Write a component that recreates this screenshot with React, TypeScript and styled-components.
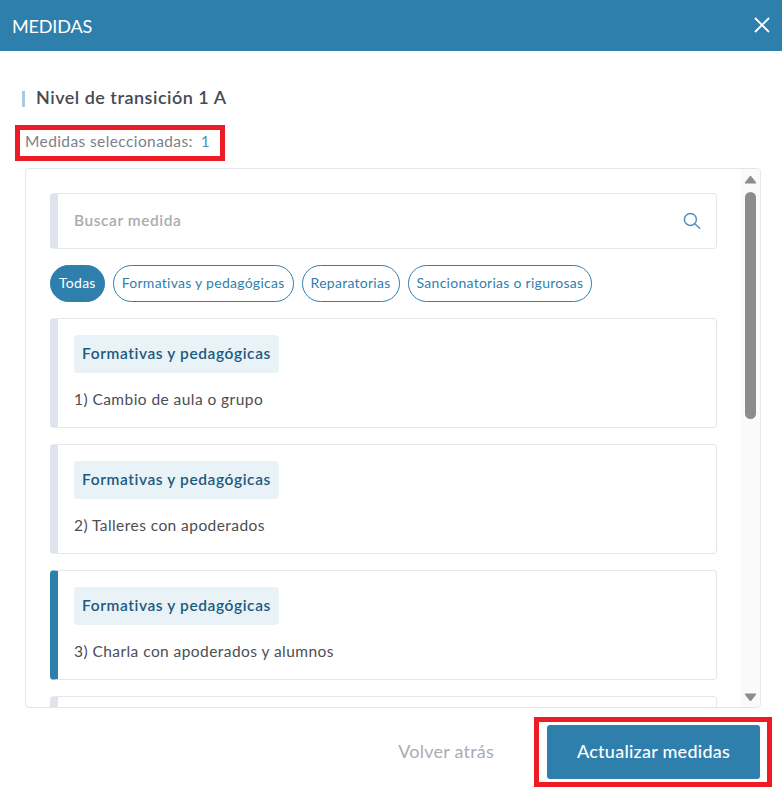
import React from "react";
import styled, { createGlobalStyle } from "styled-components";

const Global = createGlobalStyle`
  html, body { margin: 0; padding: 0; background: #fff; }
  body { width: 782px; height: 787px; overflow: hidden; font-family: "Lato", "Open Sans", sans-serif; }
  * { box-sizing: border-box; }
`;
const Modal = styled.div`
  width: 782px; height: 787px; display: flex; flex-direction: column;
`;
const Header = styled.header`
  height: 51px; background: #2f7fad; color: #fff; display: flex; align-items: center;
  justify-content: space-between; padding: 0 12px; flex: none;
`;
const HeaderTitle = styled.h1`
  margin: 0; font-size: 18px; font-weight: 400; line-height: 46px; height: 46px; letter-spacing: -.15px;
`;
const CloseButton = styled.button`
  border: 0; background: none; padding: 0; width: 16px; height: 16px; display: flex; margin-top: -1px; margin-right: 0;
`;
const Body = styled.div`
  flex: 1; display: flex; flex-direction: column; padding: 37px 21px 0 15px; min-height: 0;
`;
const Level = styled.div`
  display: flex; align-items: center; gap: 11px; height: 20px; margin-left: 7px; margin-bottom: 17px;
`;
const LevelBar = styled.span`
  width: 3px; height: 16px; background: #a9cbdf; flex: none; margin-top: 1px;
`;
const LevelName = styled.h2`
  margin: 0 0 2px; font-size: 18px; font-weight: 600; color: #464a53; letter-spacing: .5px; line-height: 18px;
`;
const Highlight = styled.div`
  border: 5px solid #ed1c24; height: 36px; width: 210px; display: flex; align-items: center; gap: 8px;
  padding: 0 0 5px 5px; font-size: 15.5px; color: #7c8087; letter-spacing: .4px; flex: none;
`;
const Count = styled.span`
  color: #4f93bb; font-size: 15.5px;
`;
const Panel = styled.section`
  margin: 7px 0 0 10px; height: 540px; width: 736px; border: 1px solid #e4e6ee; border-radius: 4px;
  display: flex; overflow: hidden; flex: none;
`;
const Scroller = styled.div`
  flex: 1; min-width: 0; overflow: hidden; padding: 24px 24px 0 24px; display: flex; flex-direction: column;
`;
const Search = styled.div`
  height: 56px; flex: none; border: 1px solid #e4e6ee; border-left: 8px solid #dfe3ec; border-radius: 4px;
  display: flex; align-items: center; justify-content: space-between; padding: 0 15px 2px 16px;
  font-size: 15.5px; font-weight: 600; color: #a9acb3; letter-spacing: .55px;
`;
const SearchGlyph = styled.svg`
  margin-top: 2px; flex: none;
`;
const Chips = styled.div`
  display: flex; gap: 8px; margin: 16px 0; flex: none;
`;
const Chip = styled.button<{ $active?: boolean }>`
  height: 37px; border-radius: 18.5px; border: 1px solid #2f7fad; padding: 0 8px 2px; font: inherit; font-size: 14px;
  letter-spacing: .27px; white-space: nowrap;
  color: ${(p) => (p.$active ? "#fff" : "#2f7fad")};
  background: ${(p) => (p.$active ? "#2f7fad" : "#fff")};
`;
const Cards = styled.div`
  display: flex; flex-direction: column; gap: 16px; flex: none;
`;
const Card = styled.article<{ $selected?: boolean }>`
  height: 110px; flex: none; border: 1px solid #e4e6ee; border-left: 8px solid ${(p) => (p.$selected ? "#2f7fad" : "#dfe3ec")};
  border-radius: 4px; padding: 16px 16px 0;
`;
const Tag = styled.span`
  display: inline-flex; align-items: center; height: 38px; width: 205px; padding: 0 0 2px 8px; background: #e9f2f7;
  border-radius: 4px; color: #1d5a7e; font-size: 15.5px; font-weight: 600; letter-spacing: .6px; white-space: nowrap;
`;
const CardText = styled.p`
  margin: 16px 0 0; font-size: 15.5px; line-height: 20px; color: #4b4e56; letter-spacing: .44px;
`;
const ScrollBar = styled.div`
  width: 19px; flex: none; background: #fafafa; display: flex; flex-direction: column; align-items: center;
  padding-top: 6px;
`;
const Arrow = styled.svg<{ $down?: boolean }>`
  width: 13px; height: 9px; flex: none; display: block; margin-bottom: ${(p) => (p.$down ? "5px" : "0")};
`;
const Thumb = styled.div`
  width: 11px; height: 227px; border-radius: 6px; background: #8c8c8c; margin-top: 8px; flex: none;
`;
const Spacer = styled.div`
  flex: 1;
`;
const Footer = styled.footer`
  display: flex; justify-content: flex-end; align-items: center; gap: 40px; margin-top: 9px; margin-right: -11px; flex: none;
`;
const BackButton = styled.button`
  border: 0; background: none; padding: 0 0 2px; font: inherit; font-size: 18px; color: #a9acb3; letter-spacing: .22px;
`;
const ButtonFrame = styled.div`
  border: 5px solid #ed1c24; width: 238px; height: 70px; padding: 3px 7px 3px 8px; display: flex;
`;
const PrimaryButton = styled.button`
  flex: 1; border: 0; border-radius: 3px; background: #2f7fad; color: #fff; font: inherit; font-size: 18px; font-weight: 500; letter-spacing: .25px; padding: 0 0 2px;
`;

const Cross = () => (
  <svg width="16" height="16" viewBox="0 0 16 16" fill="none" stroke="#fff" strokeWidth="1.9">
    <path d="M1 1l14 14M15 1L1 15" />
  </svg>
);
const SearchIcon = () => (
  <SearchGlyph width="18" height="18" viewBox="0 0 18 18" fill="none" stroke="#4f93bb" strokeWidth="1.5">
    <circle cx="7.4" cy="7.4" r="6" />
    <path d="M11.8 11.8l5.4 5" />
  </SearchGlyph>
);

const measures = [
  { text: "1) Cambio de aula o grupo" },
  { text: "2) Talleres con apoderados" },
  { text: "3) Charla con apoderados y alumnos", selected: true },
];

export default function App() {
  return (
    <Modal>
      <Global />
      <Header>
        <HeaderTitle>MEDIDAS</HeaderTitle>
        <CloseButton aria-label="Cerrar"><Cross /></CloseButton>
      </Header>
      <Body>
        <Level>
          <LevelBar />
          <LevelName>Nivel de transición 1 A</LevelName>
        </Level>
        <Highlight>
          Medidas seleccionadas: <Count>1</Count>
        </Highlight>
        <Panel>
          <Scroller>
            <Search>
              Buscar medida
              <SearchIcon />
            </Search>
            <Chips>
              <Chip $active>Todas</Chip>
              <Chip>Formativas y pedagógicas</Chip>
              <Chip>Reparatorias</Chip>
              <Chip>Sancionatorias o rigurosas</Chip>
            </Chips>
            <Cards>
              {measures.map((m) => (
                <Card key={m.text} $selected={m.selected}>
                  <Tag>Formativas y pedagógicas</Tag>
                  <CardText>{m.text}</CardText>
                </Card>
              ))}
              <Card />
            </Cards>
          </Scroller>
          <ScrollBar>
            <Arrow viewBox="0 0 13 9"><path d="M6.5 1L12 8H1z" fill="#8c8c8c" stroke="#8c8c8c" strokeLinejoin="round" /></Arrow>
            <Thumb />
            <Spacer />
            <Arrow $down viewBox="0 0 13 9"><path d="M6.5 8L12 1H1z" fill="#8c8c8c" stroke="#8c8c8c" strokeLinejoin="round" /></Arrow>
          </ScrollBar>
        </Panel>
        <Footer>
          <BackButton>Volver atrás</BackButton>
          <ButtonFrame>
            <PrimaryButton>Actualizar medidas</PrimaryButton>
          </ButtonFrame>
        </Footer>
      </Body>
    </Modal>
  );
}
